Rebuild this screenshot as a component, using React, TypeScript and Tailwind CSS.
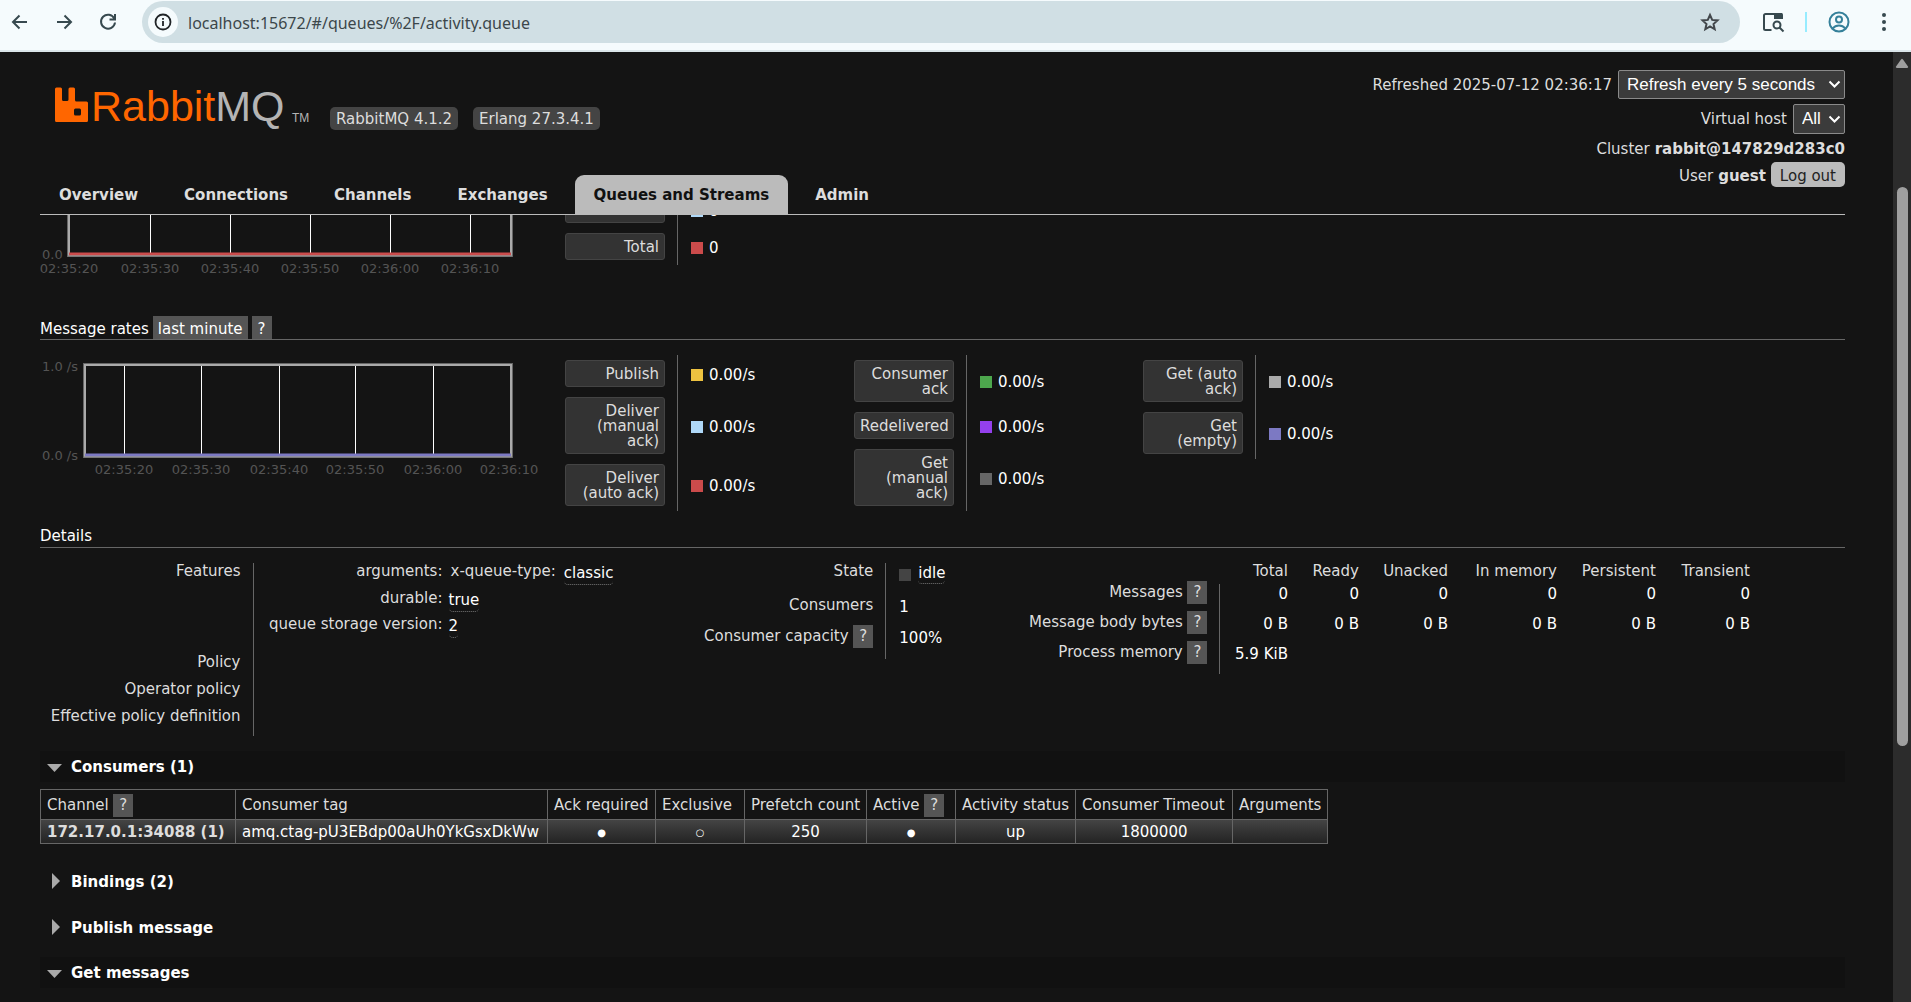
import React from "react";

const help = "-my-[4px] inline-block bg-[#555] px-[6px] py-[3px] leading-[17px] text-[#ddd]";

function Help({ label }: { label: string }) {
  return (
    <button type="button" aria-label={label} className={help}>
      ?
    </button>
  );
}

function BrowserBar() {
  return (
    <div className="flex h-[52px] shrink-0 items-start border-b-2 border-[#dbe6ea] bg-[#f5fbfd] pr-[18px] pl-2">
      <div className="flex h-[43px] w-[134px] shrink-0 items-center gap-[20px] text-[#37494f]">
        <button type="button" aria-label="Back">
          <svg width="24" height="24" viewBox="0 0 24 24" fill="none" stroke="currentColor" strokeWidth="2">
            <path d="M19 12H5M11.500 5.500L5 12l6.500 6.500" />
          </svg>
        </button>
        <button type="button" aria-label="Forward">
          <svg width="24" height="24" viewBox="0 0 24 24" fill="none" stroke="currentColor" strokeWidth="2">
            <path d="M5 12h14M12.500 5.500L19 12l-6.500 6.500" />
          </svg>
        </button>
        <button type="button" aria-label="Reload">
          <svg width="24" height="24" viewBox="0 0 24 24" fill="none" stroke="currentColor" strokeWidth="2">
            <path d="M18.300 8.500A7 7 0 1 0 19 12.500M19 4v5.500h-5.500" />
          </svg>
        </button>
      </div>
      <div className="mt-px flex h-[42px] min-w-0 flex-1 items-center rounded-full bg-[#d0dfe4] pr-[18px] pl-[6px]">
        <button
          type="button"
          aria-label="Site information"
          className="flex h-[30px] w-[30px] items-center justify-center rounded-full bg-[#f5fbfd] text-[#202427]"
        >
          <svg width="20" height="20" viewBox="0 0 20 20" fill="none" stroke="currentColor" strokeWidth="1.800">
            <circle cx="10" cy="10" r="7.500" />
            <path d="M10 9v5M10 6v1.800" />
          </svg>
        </button>
        <input
          aria-label="Address"
          readOnly
          value="localhost:15672/#/queues/%2F/activity.queue"
          className="ml-[10px] min-w-0 flex-1 bg-transparent pt-px font-['Noto_Sans',sans-serif] text-[16px] text-[#3c474b] outline-none"
        />
        <button type="button" aria-label="Bookmark" className="text-[#42474b]">
          <svg width="24" height="24" viewBox="0 0 24 24" fill="none" stroke="currentColor" strokeWidth="2">
            <path d="M12 5l2.200 4.900 5.300.5-4 3.600 1.200 5.300L12 16.500l-4.700 2.800 1.200-5.300-4-3.600 5.300-.5z" />
          </svg>
        </button>
      </div>
      <div className="flex h-[43px] shrink-0 items-center pl-[21px]">
        <button type="button" aria-label="Search tabs" className="text-[#37494f]">
          <svg width="24" height="24" viewBox="0 0 24 24" fill="none" stroke="currentColor" strokeWidth="2">
            <path d="M10.500 20H4.500A1.500 1.500 0 0 1 3 18.500v-13A1.500 1.500 0 0 1 4.500 4H21" />
            <path d="M13 3h7.500A1.500 1.500 0 0 1 22 4.500V9h-9z" fill="currentColor" stroke="none" />
            <circle cx="16" cy="15" r="3.500" />
            <path d="M18.500 17.500L22.500 21.500" />
          </svg>
        </button>
        <span className="ml-[20px] h-[20px] w-[2px] bg-[#97ecff]" />
        <button type="button" aria-label="Profile" className="ml-[20px] text-[#35809a]">
          <svg width="24" height="24" viewBox="0 0 24 24" fill="none" stroke="currentColor" strokeWidth="2">
            <circle cx="12" cy="12" r="9.500" />
            <circle cx="12" cy="9.500" r="3" />
            <path d="M5.500 18.500c3.500-4 9.500-4 13 0" />
          </svg>
        </button>
        <button type="button" aria-label="Menu" className="ml-[22px] text-[#37494f]">
          <svg width="20" height="24" viewBox="0 0 20 24" fill="currentColor">
            <circle cx="11" cy="5" r="2" />
            <circle cx="11" cy="12" r="2" />
            <circle cx="11" cy="19" r="2" />
          </svg>
        </button>
      </div>
    </div>
  );
}

function Select({ id, value, className }: { id: string; value: string; className: string }) {
  return (
    <span className="relative ml-[6px] inline-flex items-center">
      <select
        id={id}
        className={
          "appearance-none rounded-[2px] border border-[#8a8a8a] bg-[#3b3b3b] pl-2 font-['Liberation_Sans',sans-serif] text-[17px] text-white " +
          className
        }
      >
        <option>{value}</option>
      </select>
      <svg className="pointer-events-none absolute right-[4px]" width="13" height="9" viewBox="0 0 13 9" fill="none" stroke="#fff" strokeWidth="2">
        <path d="M1.500 1.500l5 5 5-5" />
      </svg>
    </span>
  );
}

const tabs = ["Overview", "Connections", "Channels", "Exchanges", "Queues and Streams", "Admin"];

const badge = "mb-[2px] rounded-[5px] bg-[#444] px-[6px] pt-[5px] pb-[3px] leading-[15px]";

function Header() {
  return (
    <header className="flex shrink-0 justify-between border-b border-[#bbb]">
      <div className="flex flex-col justify-between">
        <div className="flex items-end gap-[15px] pt-[30px] pl-[15px]">
          <a href="#/" aria-label="RabbitMQ" className="flex">
            <svg width="260" height="50" viewBox="0 0 260 50">
              <path
                fill="#ff6600"
                fillRule="evenodd"
                d="M1.500 5.500h4A1.500 1.500 0 0 1 7 7V17.500a1.500 1.500 0 0 0 1.500 1.500h3.500A1.500 1.500 0 0 0 13.500 17.500V7A1.500 1.500 0 0 1 15 5.500h3.500A1.500 1.500 0 0 1 20 7V18a1.500 1.500 0 0 0 1.500 1.500h10A1.500 1.500 0 0 1 33 21v17.500a1.500 1.500 0 0 1-1.500 1.500h-30A1.500 1.500 0 0 1 0 38.500V7A1.500 1.500 0 0 1 1.500 5.500zM20.500 26.500a1.500 1.500 0 0 0-1.500 1.500v4a1.500 1.500 0 0 0 1.500 1.500h4a1.500 1.500 0 0 0 1.500-1.500v-4a1.500 1.500 0 0 0-1.500-1.500z"
              />
              <text x="36" y="39" fontFamily="'Liberation Sans', sans-serif" fontSize="43">
                <tspan fill="#ff6600">Rabbit</tspan>
                <tspan fill="#b4b4b4">MQ</tspan>
              </text>
              <text x="237" y="40" fontFamily="'Liberation Sans', sans-serif" fontSize="12" fill="#b4b4b4">
                TM
              </text>
            </svg>
          </a>
          <span className={badge}>RabbitMQ 4.1.2</span>
          <span className={badge}>Erlang 27.3.4.1</span>
        </div>
        <nav className="flex gap-[8px] font-bold">
          {tabs.map((t) => (
            <a
              key={t}
              href={"#/" + t}
              className={
                t === "Queues and Streams"
                  ? "rounded-t-[9px] bg-[#bbb] px-[19px] pt-[13px] pb-[11px] leading-[15px] text-[#111]"
                  : "px-[19px] pt-[13px] pb-[11px] leading-[15px]"
              }
            >
              {t}
            </a>
          ))}
        </nav>
      </div>
      <div className="flex flex-col items-end pt-[18px] pb-[27px]">
        <div className="flex h-[29px] items-center">
          <label htmlFor="refresh">Refreshed 2025-07-12 02:36:17</label>
          <Select id="refresh" value="Refresh every 5 seconds" className="h-[29px] w-[227px]" />
        </div>
        <div className="mt-[5px] flex h-[30px] items-center">
          <label htmlFor="vhost">Virtual host</label>
          <Select id="vhost" value="All" className="h-[30px] w-[52px]" />
        </div>
        <div className="mt-[6px] flex h-[18px] items-center gap-[5px]">
          Cluster <b>rabbit@147829d283c0</b>
        </div>
        <div className="mt-[4px] flex h-[25px] items-center gap-[5px]">
          <span className="pt-[2px]">User</span>
          <b className="pt-[2px]">guest</b>
          <button type="button" className="h-[25px] rounded-[5px] bg-[#bbb] px-[9px] pt-[2px] text-[#222]">
            Log out
          </button>
        </div>
      </div>
    </header>
  );
}

type Tick = { x: number; label: string };

function Chart({
  left,
  top,
  bottom,
  ticks,
  yTop,
  yBottom,
  line,
}: {
  left: number;
  top: number;
  bottom: number;
  ticks: Tick[];
  yTop: string;
  yBottom: string;
  line: string;
}) {
  return (
    <svg
      width="525"
      height={bottom + 24}
      viewBox={`0 0 525 ${bottom + 24}`}
      className="shrink-0"
      fontFamily="'DejaVu Sans', sans-serif"
      fontSize="13"
      fill="#545454"
    >
      {ticks.map((t) => (
        <g key={t.label}>
          {t.x > left + 4 && t.x < 468 && <path d={`M${t.x + 0.5} ${top}V${bottom}`} stroke="#fff" />}
          <text x={t.x} y={bottom + 16} textAnchor="middle">
            {t.label}
          </text>
        </g>
      ))}
      <rect x={left + 0.5} y={top + 0.5} width={472 - left} height={bottom - top - 1} fill="none" stroke="#666" />
      <rect x={left + 2} y={top + 2} width={472 - left - 3} height={bottom - top - 4} fill="none" stroke="#aaa" strokeWidth="2" />
      <path d={`M${left + 2} ${bottom - 3}H471`} stroke={line} strokeWidth="3" />
      <path d={`M${left + 1} ${bottom - 1}H472`} stroke="#8a8a8a" />
      <text x="2" y={top + 8}>
        {yTop}
      </text>
      <text x="2" y={bottom + 2}>
        {yBottom}
      </text>
    </svg>
  );
}

type Fact = { name: string; color: string; value: string };

function Rates({ facts }: { facts: Fact[] }) {
  return (
    <table className="w-[289px] shrink-0 border-collapse">
      <tbody>
        {facts.map((f) => (
          <tr key={f.name}>
            <th className="w-[112px] py-[5px] pr-[12px] font-normal">
              <button
                type="button"
                className="block w-[100px] rounded-[3px] border border-[#444] bg-[#333] px-[5px] pt-[6px] pb-[4px] text-right leading-[15px]"
              >
                {f.name}
              </button>
            </th>
            <td className="border-l border-[#666] pt-[2px] pl-[13px] text-white">
              <span className="flex items-center gap-[6px]">
                <span className="h-[12px] w-[12px]" style={{ backgroundColor: f.color }} />
                {f.value}
              </span>
            </td>
          </tr>
        ))}
      </tbody>
    </table>
  );
}

const rates: Fact[][] = [
  [
    { name: "Publish", color: "#edc240", value: "0.00/s" },
    { name: "Deliver (manual ack)", color: "#afd8f8", value: "0.00/s" },
    { name: "Deliver (auto ack)", color: "#cb4b4b", value: "0.00/s" },
  ],
  [
    { name: "Consumer ack", color: "#4da74d", value: "0.00/s" },
    { name: "Redelivered", color: "#9440ed", value: "0.00/s" },
    { name: "Get (manual ack)", color: "#666666", value: "0.00/s" },
  ],
  [
    { name: "Get (auto ack)", color: "#aaaaaa", value: "0.00/s" },
    { name: "Get (empty)", color: "#7c79c3", value: "0.00/s" },
  ],
];

const labelCell = "pt-px pr-[12px] text-right align-top font-normal whitespace-nowrap";
const valueCell = "border-l border-[#666] pt-[3px] pl-[13px] align-top text-white";
const featureLabel = "text-right align-top font-normal whitespace-nowrap";

function Term({ children }: { children: React.ReactNode }) {
  return <abbr className="rounded-[4px] border-b border-dotted border-[#777] pb-[2px] text-white no-underline">{children}</abbr>;
}

function Details() {
  return (
    <div className="flex items-start pt-[15px] leading-[15px]">
      <div className="w-[664px] shrink-0">
        <table className="border-collapse">
          <tbody>
            <tr className="h-[91px]">
              <th className={labelCell + " w-[213px]"}>Features</th>
              <td className="border-l border-[#666] pt-px pl-[14px] align-top">
                <table>
                  <tbody>
                    <tr className="h-[27px]">
                      <th className={featureLabel + " w-[175px]"}>arguments:</th>
                      <td className="flex gap-[8px] pl-[8px]">
                        x-queue-type:
                        <span className="pt-[2px]">
                          <Term>classic</Term>
                        </span>
                      </td>
                    </tr>
                    <tr className="h-[26px]">
                      <th className={featureLabel}>durable:</th>
                      <td className="pt-[2px] pl-[6px] align-top">
                        <Term>true</Term>
                      </td>
                    </tr>
                    <tr className="h-[26px]">
                      <th className={featureLabel}>queue storage version:</th>
                      <td className="pt-[2px] pl-[6px] align-top">
                        <Term>2</Term>
                      </td>
                    </tr>
                  </tbody>
                </table>
              </td>
            </tr>
            <tr className="h-[27px]">
              <th className={labelCell}>Policy</th>
              <td className={valueCell} />
            </tr>
            <tr className="h-[27px]">
              <th className={labelCell}>Operator policy</th>
              <td className={valueCell} />
            </tr>
            <tr className="h-[28px]">
              <th className={labelCell}>Effective policy definition</th>
              <td className={valueCell} />
            </tr>
          </tbody>
        </table>
      </div>
      <div className="w-[325px] shrink-0">
        <table className="border-collapse">
          <tbody>
            <tr className="h-[34px]">
              <th className={labelCell + " w-[180px]"}>State</th>
              <td className={valueCell}>
                <span className="flex items-center gap-[7px]">
                  <span className="h-[12px] w-[12px] bg-[#444]" />
                  <Term>idle</Term>
                </span>
              </td>
            </tr>
            <tr className="h-[31px]">
              <th className={labelCell}>Consumers</th>
              <td className={valueCell}>1</td>
            </tr>
            <tr className="h-[31px]">
              <th className={labelCell}>
                Consumer capacity <Help label="About consumer capacity" />
              </th>
              <td className={valueCell}>100%</td>
            </tr>
          </tbody>
        </table>
      </div>
      <table className="border-collapse text-right">
        <thead>
          <tr className="h-[21px] [&>th]:pt-px [&>th]:align-top [&>th]:font-normal">
            <td className="w-[188px]" />
            <th className="w-[68px]">Total</th>
            <th className="w-[71px]">Ready</th>
            <th className="w-[89px]">Unacked</th>
            <th className="w-[109px]">In memory</th>
            <th className="w-[99px]">Persistent</th>
            <th className="w-[94px]">Transient</th>
          </tr>
        </thead>
        <tbody>
          {[
            ["Messages", ["0", "0", "0", "0", "0", "0"]],
            ["Message body bytes", ["0 B", "0 B", "0 B", "0 B", "0 B", "0 B"]],
            ["Process memory", ["5.9 KiB"]],
          ].map(([name, values]) => (
            <tr key={name as string} className="h-[30px]">
              <th className={labelCell}>
                {name} <Help label={"About " + name} />
              </th>
              {(values as string[]).map((v, i) => (
                <td
                  key={i}
                  className={
                    i === 0 ? "border-l border-[#666] pt-[3px] align-top text-white" : "pt-[3px] align-top text-white"
                  }
                >
                  {v}
                </td>
              ))}
            </tr>
          ))}
        </tbody>
      </table>
    </div>
  );
}

function SectionTitle({ open, children }: { open: boolean; children: React.ReactNode }) {
  return (
    <h2 className={open ? "bg-[#111]" : ""}>
      <button type="button" className="flex h-[31px] w-full items-center pl-[7px] text-left font-bold text-white">
        <svg width="24" height="20" viewBox="0 0 24 20" fill="#aaa">
          {open ? <path d="M0 7h15l-7.500 8z" /> : <path d="M5 1v16l8-8z" />}
        </svg>
        {children}
      </button>
    </h2>
  );
}

const cell = "border border-[#666] px-[6px] pt-px";

function Consumers() {
  return (
    <table className="mt-[7px] border-collapse leading-[15px]">
      <thead>
        <tr className="h-[30px] text-left whitespace-nowrap [&>th]:font-normal">
          <th className={cell + " w-[195px]"}>
            Channel <Help label="About channel" />
          </th>
          <th className={cell + " w-[312px]"}>Consumer tag</th>
          <th className={cell + " w-[108px]"}>Ack required</th>
          <th className={cell + " w-[89px]"}>Exclusive</th>
          <th className={cell + " w-[122px]"}>Prefetch count</th>
          <th className={cell + " w-[89px]"}>
            Active <Help label="About active" />
          </th>
          <th className={cell + " w-[120px]"}>Activity status</th>
          <th className={cell + " w-[157px]"}>Consumer Timeout</th>
          <th className={cell + " w-[95px]"}>Arguments</th>
        </tr>
      </thead>
      <tbody>
        <tr className="h-[24px] bg-linear-to-b from-[#444] to-[#222] text-center text-white">
          <td className={cell + " text-left font-bold whitespace-nowrap text-[#ddd]"}>
            <a href="#/channels">172.17.0.1:34088 (1)</a>
          </td>
          <td className={cell + " text-left whitespace-nowrap"}>amq.ctag-pU3EBdp00aUh0YkGsxDkWw</td>
          <td className={cell + " text-[10px]"}>●</td>
          <td className={cell + " text-[10px]"}>○</td>
          <td className={cell}>250</td>
          <td className={cell + " text-[10px]"}>●</td>
          <td className={cell}>up</td>
          <td className={cell}>1800000</td>
          <td className={cell} />
        </tr>
      </tbody>
    </table>
  );
}

function Scrollbar() {
  return (
    <div className="flex w-[18px] shrink-0 flex-col items-center bg-[#2c2c2c] pt-[6px]">
      <svg width="14" height="11" viewBox="0 0 14 11" fill="#9f9f9f">
        <path d="M6 1.500L1 8.500a1 1 0 0 0 1 1.500h10a1 1 0 0 0 1-1.500l-5-7a1.200 1.200 0 0 0-2 0z" />
      </svg>
      <div className="flex w-full flex-1 flex-col items-center">
        <div className="basis-[12.600%]" />
        <div className="w-[11px] basis-[60%] rounded-full bg-[#9f9f9f]" />
      </div>
    </div>
  );
}

const queuedTicks: Tick[] = [
  { x: 29, label: "02:35:20" },
  { x: 110, label: "02:35:30" },
  { x: 190, label: "02:35:40" },
  { x: 270, label: "02:35:50" },
  { x: 350, label: "02:36:00" },
  { x: 430, label: "02:36:10" },
];

const rateTicks: Tick[] = [
  { x: 84, label: "02:35:20" },
  { x: 161, label: "02:35:30" },
  { x: 239, label: "02:35:40" },
  { x: 315, label: "02:35:50" },
  { x: 393, label: "02:36:00" },
  { x: 469, label: "02:36:10" },
];

export default function App() {
  return (
    <div className="flex h-screen flex-col overflow-hidden bg-[#141414] font-['DejaVu_Sans',sans-serif] text-[15px] leading-[18px] text-[#ddd]">
      <BrowserBar />
      <div className="flex min-h-0 flex-1">
        <div className="flex min-w-0 flex-1 flex-col pr-[48px] pl-[40px]">
          <Header />
          <main className="min-h-0 flex-1 overflow-hidden">
            <section className="-mt-[65px] flex h-[166px] items-start">
              <Chart left={27} top={6} bottom={107} ticks={queuedTicks} yTop="1.0" yBottom="0.0" line="#cb4b4b" />
              <div className="pt-[4px]">
                <Rates
                  facts={[
                    { name: "Ready", color: "#edc240", value: "0" },
                    { name: "Unacked", color: "#afd8f8", value: "0" },
                    { name: "Total", color: "#cb4b4b", value: "0" },
                  ]}
                />
              </div>
            </section>
            <section>
              <h3 className="flex h-[24px] items-center border-b border-[#666] text-white">
                <span className="pt-[2px]">Message rates</span>
                <button type="button" className="ml-[4px] h-[23px] bg-[#555] px-[5px] pt-[2px]">
                  last minute
                </button>
                <button type="button" aria-label="About message rates" className="ml-[4px] h-[23px] bg-[#555] px-[6px] pt-[2px]">
                  ?
                </button>
              </h3>
              <div className="flex items-start pt-[15px]">
                <div className="pt-[5px]">
                  <Chart left={43} top={3} bottom={98} ticks={rateTicks} yTop="1.0 /s" yBottom="0.0 /s" line="#7c79c3" />
                </div>
                {rates.map((facts) => (
                  <Rates key={facts[0].name} facts={facts} />
                ))}
              </div>
            </section>
            <section className="mt-[11px]">
              <h3 className="flex h-[26px] items-center border-b border-[#666] pt-[2px] text-white">Details</h3>
              <Details />
            </section>
            <section className="mt-[15px]">
              <SectionTitle open>Consumers (1)</SectionTitle>
              <Consumers />
            </section>
            <section className="mt-[22px]">
              <SectionTitle open={false}>Bindings (2)</SectionTitle>
            </section>
            <section className="mt-[15px]">
              <SectionTitle open={false}>Publish message</SectionTitle>
            </section>
            <section className="mt-[14px]">
              <SectionTitle open>Get messages</SectionTitle>
            </section>
          </main>
        </div>
        <Scrollbar />
      </div>
    </div>
  );
}
